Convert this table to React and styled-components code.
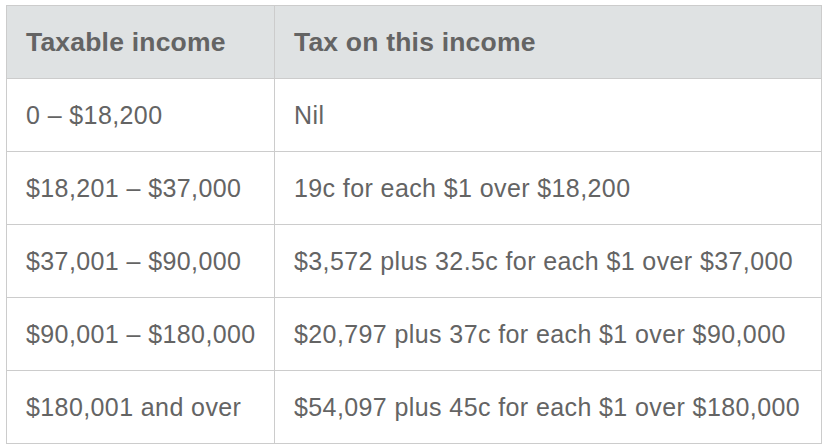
import React from 'react';
import styled, { createGlobalStyle } from 'styled-components';

const GlobalStyle = createGlobalStyle`
  body {
    margin: 0;
    background: #ffffff;
    font-family: "Liberation Sans", Arial, sans-serif;
  }
`;

const Page = styled.div`
  padding: 5px 0 0 6px;
`;

const Table = styled.table`
  width: 816px;
  table-layout: fixed;
  border-collapse: collapse;
  border: 1px solid #cccccc;
  color: #646464;
`;

const Row = styled.tr`
  height: 73px;
`;

const HeadCell = styled.th`
  background: #dfe2e3;
  border: 1px solid #cccccc;
  padding: 0 19px;
  text-align: left;
  font-size: 26.5px;
  font-weight: 700;
  letter-spacing: 0.2px;
  width: ${props => props.width || 'auto'};
`;

const Cell = styled.td`
  border: 1px solid #cccccc;
  padding: 0 18px 0 19px;
  font-size: 25px;
  font-weight: 400;
  letter-spacing: 0.4px;
  white-space: nowrap;
`;

const rows = [
  ['0 – $18,200', 'Nil'],
  ['$18,201 – $37,000', '19c for each $1 over $18,200'],
  ['$37,001 – $90,000', '$3,572 plus 32.5c for each $1 over $37,000'],
  ['$90,001 – $180,000', '$20,797 plus 37c for each $1 over $90,000'],
  ['$180,001 and over', '$54,097 plus 45c for each $1 over $180,000'],
];

function App() {
  return (
    <Page>
      <GlobalStyle />
      <Table>
        <thead>
          <Row>
            <HeadCell width="229px">Taxable income</HeadCell>
            <HeadCell>Tax on this income</HeadCell>
          </Row>
        </thead>
        <tbody>
          {rows.map(([income, tax]) => (
            <Row key={income}>
              <Cell>{income}</Cell>
              <Cell>{tax}</Cell>
            </Row>
          ))}
        </tbody>
      </Table>
    </Page>
  );
}

export default App;
